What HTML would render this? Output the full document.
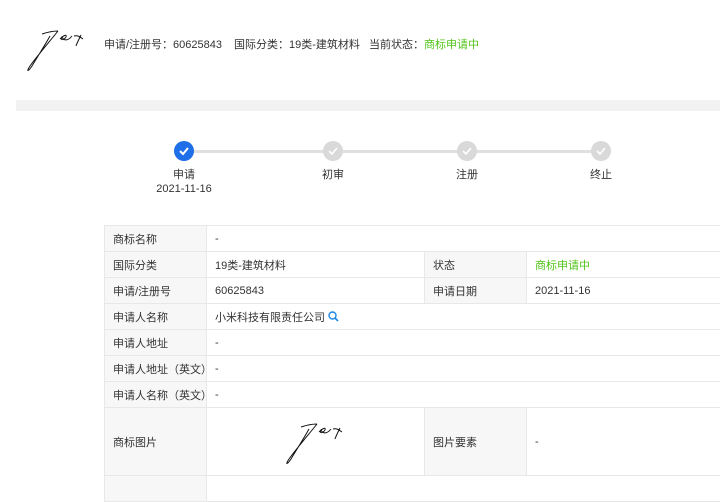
<!DOCTYPE html>
<html><head><meta charset="utf-8"><style>
*{margin:0;padding:0;box-sizing:border-box}
body{width:720px;height:480px;overflow:hidden;background:#fff;font-family:"Liberation Sans","Noto Sans CJK SC",sans-serif;font-size:11px;color:#333;position:relative}
.a{position:absolute;white-space:nowrap}
.g{color:#52c41a}
.band{position:absolute;left:16px;top:100px;width:704px;height:11px;background:#f2f2f2}
.line{position:absolute;top:150px;height:3px;background:#e0e0e0}
.c{position:absolute;width:20px;height:20px;border-radius:50%;background:#d9d9d9;top:141px}
.c svg{position:absolute;left:4px;top:4px}
.lab{position:absolute;top:168px;width:80px;text-align:center;line-height:14px}
table{position:absolute;left:104px;top:225px;border-collapse:collapse;width:620px;table-layout:fixed}
td{border:1px solid #e8e8e8;height:26px;padding:0 8px;font-size:11px;white-space:nowrap;overflow:hidden}
td.h{background:#f7f7f7}
</style></head><body>
<svg class="a" style="left:20px;top:25px" width="70" height="50" viewBox="0 0 70 50"><path d="M22 9 C28 7 34 6 38 6 M38 6 C30 16 18 30 10 41 C6 47 8 47 12 41 C18 31 25 20 30 11 M40 14 C44 10 47 9 46 12 C44 15 40 16 42 12 C44 16 48 16 52 11 M54 11 C58 10 60 12 63 14 M61 10 C59 14 57 18 56 21" fill="none" stroke="#111" stroke-width="1"/></svg>
<div class="a" style="left:104px;top:36px">申请/注册号：60625843</div>
<div class="a" style="left:234px;top:36px">国际分类：19类-建筑材料</div>
<div class="a" style="left:369px;top:36px">当前状态：<span class="g">商标申请中</span></div>
<div class="band"></div>
<div class="line" style="left:184px;width:417px"></div>
<div class="c" style="left:174px;background:#1e6fe8"><svg width="12" height="12"><path d="M2 6 L5 9 L10 3" fill="none" stroke="#fff" stroke-width="2"/></svg></div>
<div class="c" style="left:323px"><svg width="12" height="12"><path d="M2 6 L5 9 L10 3" fill="none" stroke="#fff" stroke-width="1.6"/></svg></div>
<div class="c" style="left:457px"><svg width="12" height="12"><path d="M2 6 L5 9 L10 3" fill="none" stroke="#fff" stroke-width="1.6"/></svg></div>
<div class="c" style="left:591px"><svg width="12" height="12"><path d="M2 6 L5 9 L10 3" fill="none" stroke="#fff" stroke-width="1.6"/></svg></div>
<div class="lab" style="left:144px">申请<br>2021-11-16</div>
<div class="lab" style="left:293px">初审</div>
<div class="lab" style="left:427px">注册</div>
<div class="lab" style="left:561px">终止</div>
<table>
<colgroup><col style="width:102px"><col style="width:218px"><col style="width:102px"><col style="width:198px"></colgroup>
<tr><td class="h">商标名称</td><td colspan="3">-</td></tr>
<tr><td class="h">国际分类</td><td>19类-建筑材料</td><td class="h">状态</td><td class="g">商标申请中</td></tr>
<tr><td class="h">申请/注册号</td><td>60625843</td><td class="h">申请日期</td><td>2021-11-16</td></tr>
<tr><td class="h">申请人名称</td><td colspan="3">小米科技有限责任公司 <svg width="11" height="11" style="vertical-align:-1px"><circle cx="4.5" cy="4.5" r="3.5" fill="none" stroke="#1e88e5" stroke-width="1.4"/><path d="M7 7 L10 10" stroke="#1e88e5" stroke-width="1.6"/></svg></td></tr>
<tr><td class="h">申请人地址</td><td colspan="3">-</td></tr>
<tr><td class="h">申请人地址（英文）</td><td colspan="3">-</td></tr>
<tr><td class="h">申请人名称（英文）</td><td colspan="3">-</td></tr>
<tr><td class="h" style="height:68px">商标图片</td><td style="position:relative"><svg style="position:absolute;left:72px;top:10px" width="70" height="50" viewBox="0 0 70 50"><path d="M22 9 C28 7 34 6 38 6 M38 6 C30 16 18 30 10 41 C6 47 8 47 12 41 C18 31 25 20 30 11 M40 14 C44 10 47 9 46 12 C44 15 40 16 42 12 C44 16 48 16 52 11 M54 11 C58 10 60 12 63 14 M61 10 C59 14 57 18 56 21" fill="none" stroke="#111" stroke-width="1"/></svg></td><td class="h">图片要素</td><td>-</td></tr>
<tr><td class="h"></td><td colspan="3"></td></tr>
</table>
</body></html>
